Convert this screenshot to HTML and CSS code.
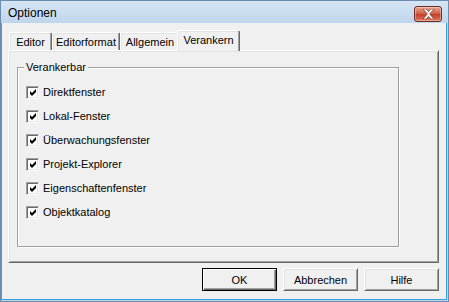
FILE: index.html
```html
<!DOCTYPE html>
<html lang="de">
<head>
<meta charset="utf-8">
<title>Optionen</title>
<link rel="stylesheet" href="styles.css">
</head>
<body>
<div class="window">
  <div class="titlebar">
    <span class="title">Optionen</span>
    <div class="close">
      <svg width="13" height="10" viewBox="0 0 13 10"><path d="M1 0 H4 L6.5 2.6 L9 0 H12 L8 4.5 V5.5 L12 10 H9 L6.5 7.4 L4 10 H1 L5 5.5 V4.5 Z" fill="#fff" stroke="#5a231a" stroke-width="0.6"/></svg>
    </div>
  </div>
  <div class="client">
    <div class="tabs">
      <div class="tab t1">Editor</div>
      <div class="tab t2">Editorformat</div>
      <div class="tab t3">Allgemein</div>
      <div class="tab t4 active">Verankern</div>
    </div>
    <div class="panel">
      <div class="group">
        <span class="legend">Verankerbar</span>
        <div class="row"><span class="box"><svg width="9" height="9" viewBox="0 0 9 9"><path d="M1 3 L3 5 L7 1 V4 L3 8 L1 6 Z" fill="#000"/></svg></span>Direktfenster</div>
        <div class="row"><span class="box"><svg width="9" height="9" viewBox="0 0 9 9"><path d="M1 3 L3 5 L7 1 V4 L3 8 L1 6 Z" fill="#000"/></svg></span>Lokal-Fenster</div>
        <div class="row"><span class="box"><svg width="9" height="9" viewBox="0 0 9 9"><path d="M1 3 L3 5 L7 1 V4 L3 8 L1 6 Z" fill="#000"/></svg></span>Überwachungsfenster</div>
        <div class="row"><span class="box"><svg width="9" height="9" viewBox="0 0 9 9"><path d="M1 3 L3 5 L7 1 V4 L3 8 L1 6 Z" fill="#000"/></svg></span>Projekt-Explorer</div>
        <div class="row"><span class="box"><svg width="9" height="9" viewBox="0 0 9 9"><path d="M1 3 L3 5 L7 1 V4 L3 8 L1 6 Z" fill="#000"/></svg></span>Eigenschaftenfenster</div>
        <div class="row"><span class="box"><svg width="9" height="9" viewBox="0 0 9 9"><path d="M1 3 L3 5 L7 1 V4 L3 8 L1 6 Z" fill="#000"/></svg></span>Objektkatalog</div>
      </div>
    </div>
    <div class="buttons">
      <div class="btn default">OK</div>
      <div class="btn">Abbrechen</div>
      <div class="btn">Hilfe</div>
    </div>
  </div>
</div>
</body>
</html>
```
FILE: styles.css
```css
html, body {
  margin: 0;
  padding: 0;
  background: #fff;
}
.window {
  width: 449px;
  height: 302px;
  box-sizing: border-box;
  border: 1px solid #6c8cab;
  background: linear-gradient(#d6e5f4, #bfd5ec 22px, #bfd5ec);
  display: flex;
  flex-direction: column;
  font-family: "Liberation Sans", Arial, sans-serif;
  font-size: 11px;
  color: #000;
}
.titlebar {
  height: 22px;
  flex: none;
  display: flex;
  align-items: center;
  justify-content: space-between;
  padding: 0 6px 0 7px;
}
.title {
  font-size: 12px;
  color: #000;
  margin-top: 2px;
}
.close {
  width: 28px;
  height: 16px;
  box-sizing: border-box;
  margin-top: 4px;
  border: 1px solid #6e2e24;
  border-radius: 3px;
  background: linear-gradient(#e8a493, #d2634b 45%, #c2412a 55%, #d97a5e);
  box-shadow: inset 0 0 0 1px rgba(255,255,255,0.35);
  display: flex;
  align-items: center;
  justify-content: center;
}
.client {
  flex: 1;
  background: #f0f0f0;
  margin: 0 1px 1px 0;
  border-left: 1px solid #38a2dc;
  border-right: 1px solid #38a2dc;
  border-bottom: 1px solid #38a2dc;
  padding: 7px 5px 0 6px;
  display: flex;
  flex-direction: column;
}
.tabs {
  display: flex;
  align-items: flex-end;
  height: 20px;
  padding-left: 1px;
  position: relative;
  z-index: 1;
}
.tab {
  height: 18px;
  box-sizing: border-box;
  border-top: 1px solid #fff;
  border-left: 1px solid #fff;
  border-right: 1px solid #696969;
  box-shadow: inset -1px 0 0 #a0a0a0, inset 1px 1px 0 #e3e3e3;
  border-radius: 2px 2px 0 0;
  display: flex;
  align-items: center;
  justify-content: center;
  padding-top: 1px;
  background: #f0f0f0;
}
.t1 { width: 43px; }
.t2 { width: 68px; }
.t3 { width: 59px; border-right: none; box-shadow: inset 1px 1px 0 #e3e3e3; }
.t4 { width: 63px; }
.tab.active {
  height: 21px;
  margin-bottom: -1px;
  margin-left: -2px;
  padding-bottom: 3px;
}
.panel {
  width: 431px;
  height: 213px;
  box-sizing: border-box;
  border-top: 1px solid #fff;
  border-left: 1px solid #fff;
  border-right: 1px solid #696969;
  border-bottom: 1px solid #696969;
  box-shadow: inset 1px 1px 0 #e3e3e3, inset -1px -1px 0 #a0a0a0;
  padding: 16px 0 0 8px;
}
.group {
  position: relative;
  width: 382px;
  height: 180px;
  box-sizing: border-box;
  border: 1px solid #a0a0a0;
  box-shadow: inset 1px 1px 0 #fff, 1px 1px 0 #fff;
  padding: 12px 0 0 8px;
}
.legend {
  position: absolute;
  left: 6px;
  top: -7px;
  padding: 0 2px;
  line-height: 13px;
  background: #f0f0f0;
}
.row {
  height: 24px;
  display: flex;
  align-items: center;
}
.box {
  width: 13px;
  height: 13px;
  box-sizing: border-box;
  border-top: 1px solid #a0a0a0;
  border-left: 1px solid #a0a0a0;
  border-right: 1px solid #fff;
  border-bottom: 1px solid #fff;
  box-shadow: inset 1px 1px 0 #696969, inset -1px -1px 0 #e3e3e3;
  background: #fff;
  margin-right: 4px;
  display: flex;
  align-items: center;
  justify-content: center;
  padding: 1px 0 0 1px;
}
.box svg { display: block; }
.buttons {
  display: flex;
  justify-content: flex-end;
  gap: 6px;
  margin-top: 5px;
  width: 431px;
}
.btn {
  width: 75px;
  height: 23px;
  box-sizing: border-box;
  border-top: 1px solid #fff;
  border-left: 1px solid #fff;
  border-right: 1px solid #696969;
  border-bottom: 1px solid #696969;
  box-shadow: inset 1px 1px 0 #e3e3e3, inset -1px -1px 0 #a0a0a0;
  background: #f0f0f0;
  display: flex;
  align-items: center;
  justify-content: center;
}
.btn.default {
  border: 1px solid #000;
  box-shadow: inset 1px 1px 0 #fff, inset -1px -1px 0 #696969, inset -2px -2px 0 #a0a0a0;
}
```
